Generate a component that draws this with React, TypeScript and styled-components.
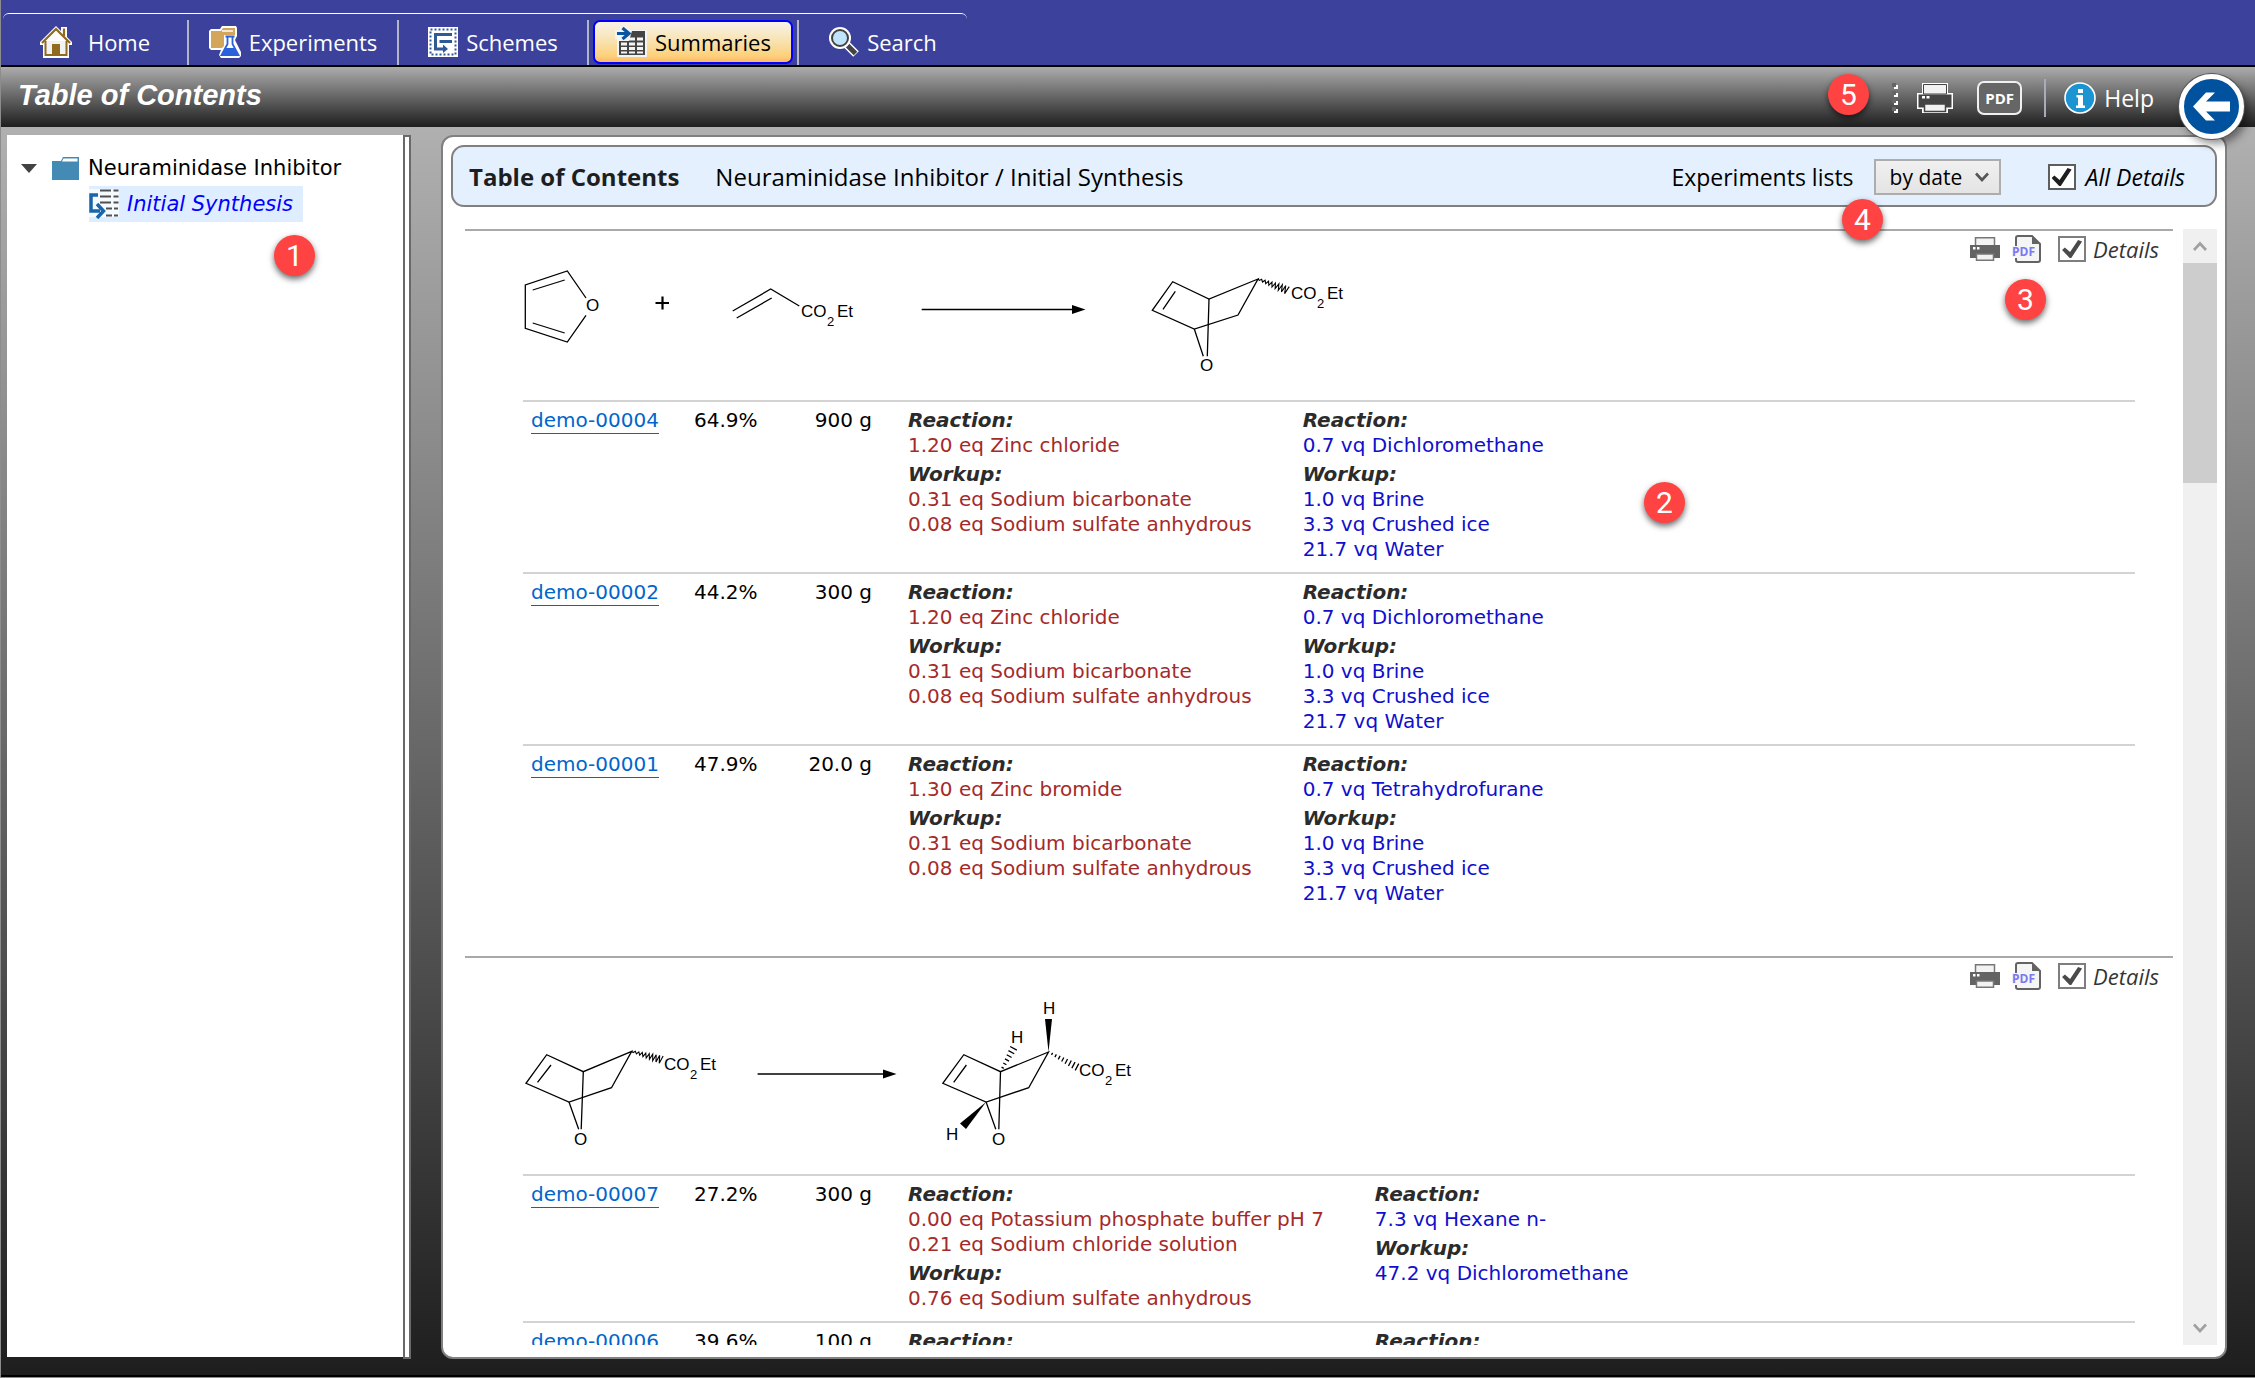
import React from 'react';
import styled, { createGlobalStyle, css } from 'styled-components';

const ui = '"Open Sans", "Noto Sans", sans-serif';
const body = '"DejaVu Sans", sans-serif';

const Global = createGlobalStyle`
  * { box-sizing: border-box; }
  html, body { margin: 0; height: 100%; }
  #root { height: 100%; }
  body { font-family: ${ui}; font-size: 22px; color: #000; }
  button, input, select { font: inherit; margin: 0; padding: 0; }
`;

const Page = styled.div`
  position: relative;
  display: flex;
  flex-direction: column;
  height: 100vh;
  overflow: hidden;
  border-left: 1px solid #8c8c8c;
  border-bottom: 1px solid #8c8c8c;
`;

/* ---------- top navigation ---------- */

const Nav = styled.nav`
  flex: none;
  display: flex;
  padding: 13px 2px 0;
  background: #3c429b;
  border-bottom: 2px solid #000;
`;

const Tabs = styled.div`
  display: flex;
  align-items: stretch;
  height: 52px;
  padding-top: 6px;
  border-top: 1px solid #fff;
  border-radius: 6px 6px 0 0;
`;

const TabCell = styled.div<{ $w: number }>`
  display: flex;
  width: ${p => p.$w}px;
  padding: 0 4px 1px;
  border-right: 2px solid #b4b6c8;
  &:last-child { border-right: 0; }
`;

const Tab = styled.button<{ $active?: boolean; $gap?: number }>`
  flex: 1;
  display: flex;
  align-items: center;
  justify-content: center;
  gap: ${p => p.$gap ?? 8}px;
  line-height: 28px;
  color: #fff;
  background: none;
  border: 2px solid transparent;
  border-radius: 7px;
  ${p => p.$active && css`
    color: #000;
    border-color: #0000ff;
    background: linear-gradient(#f8f4ea 0%, #f8dfa6 55%, #fdd07a 85%, #ffb765 100%);
  `}
  svg { flex: none; display: block; }
`;

/* ---------- dark title bar ---------- */

const TitleBar = styled.header`
  flex: none;
  display: flex;
  align-items: center;
  justify-content: space-between;
  height: 60px;
  padding: 0 101px 0 17px;
  background: linear-gradient(#acacac, #1e1e1e);
`;

const Title = styled.h1`
  margin: 0 0 4px;
  font: italic bold 29px/36px "Liberation Sans", sans-serif;
  color: #fff;
`;

const Tools = styled.div`
  display: flex;
  align-items: center;
  padding-top: 2px;
  color: #fff;
`;

const IconButton = styled.button<{ $left?: number }>`
  display: flex;
  align-items: center;
  margin-left: ${p => p.$left ?? 0}px;
  border: 0;
  background: none;
  color: inherit;
  svg { display: block; }
`;

const PdfButton = styled.button`
  width: 45px;
  height: 34px;
  margin-left: 24px;
  font-weight: 700;
  font-size: 15px;
  color: #fff;
  background: #666;
  border: 2px solid #f0f0f0;
  border-radius: 7px;
`;

const ToolSeparator = styled.span`
  width: 2px;
  height: 38px;
  margin: 0 18px 0 22px;
  background: #a6acb8;
`;

const HelpLink = styled.a`
  display: flex;
  align-items: center;
  gap: 8px;
  font-size: 23px;
  color: #fff;
  text-decoration: none;
  svg { display: block; }
`;

const BackButton = styled.button`
  position: absolute;
  top: 74px;
  right: 11px;
  width: 65px;
  height: 65px;
  background: #00529f;
  border: 5px solid #fff;
  border-radius: 50%;
  box-shadow: 0 0 0 1px #555, 4px 5px 8px rgba(0, 0, 0, 0.45);
  svg { display: block; }
`;

/* ---------- main area ---------- */

const Main = styled.main`
  flex: 1;
  min-height: 0;
  display: flex;
  padding: 8px 28px 16px 6px;
  background: linear-gradient(#b0b0b0, #1e1e1e);
  border-bottom: 2px solid #000;
`;

const Tree = styled.aside`
  flex: none;
  width: 396px;
  margin-bottom: 2px;
  padding: 15px 14px;
  background: #fff;
  font-family: ${body};
  font-size: 21px;
  line-height: 36px;
`;

const TreeRow = styled.div`
  display: flex;
  align-items: center;
  svg { display: block; }
`;

const Toggle = styled.button`
  margin-right: 15px;
  border: 0;
  background: none;
`;

const FolderName = styled.span`
  margin-left: 9px;
`;

const TreeItem = styled.a`
  display: inline-flex;
  align-items: center;
  gap: 8px;
  margin-left: 68px;
  padding-right: 10px;
  background: #deedff;
  color: #0000ff;
  font-style: italic;
  text-decoration: none;
`;

const Splitter = styled.div`
  flex: none;
  width: 8px;
  margin-right: 30px;
  background: #fff;
  border: 2px solid #696969;
`;

const Panel = styled.section`
  flex: 1;
  min-width: 0;
  display: flex;
  flex-direction: column;
  padding: 8px 8px 12px;
  background: #fff;
  border: 2px solid #808080;
  border-radius: 12px;
`;

const PanelHead = styled.div`
  flex: none;
  display: flex;
  align-items: center;
  height: 62px;
  padding: 2px 30px 0 16px;
  background: #e4f0fe;
  border: 2px solid #808080;
  border-radius: 13px;
  line-height: 32px;
`;

const PanelTitle = styled.h2`
  margin: 0 36px 0 0;
  font-size: 24px;
  font-weight: 700;
  color: #1e1e1e;
`;

const Crumb = styled.span`
  flex: 1;
  font-size: 24px;
`;

const SortLabel = styled.label`
  margin-right: 20px;
  font-size: 23px;
`;

const SelectBox = styled.div`
  position: relative;
  width: 127px;
  margin-right: 47px;
  svg { position: absolute; right: 12px; top: 13px; pointer-events: none; }
`;

const Select = styled.select`
  appearance: none;
  display: block;
  width: 100%;
  height: 36px;
  padding: 0 14px;
  color: #000;
  background: linear-gradient(#f0f0f0, #e4e4e4);
  border: 2px solid #adadad;
  border-radius: 0;
  font-size: 21px;
`;

const CheckLabel = styled.label<{ $soft?: boolean }>`
  display: flex;
  align-items: center;
  gap: ${p => (p.$soft ? 7 : 10)}px;
  font-style: italic;
  font-size: ${p => (p.$soft ? 22 : 23)}px;
  line-height: 28px;
  opacity: ${p => (p.$soft ? 0.8 : 1)};
`;

const Check = styled.input`
  appearance: none;
  display: block;
  width: 28px;
  height: 26px;
  background: #fff;
  border: 2px solid #5e5e5e;
  &:checked::before {
    content: '';
    display: block;
    width: 20px;
    height: 18px;
    margin: 2px;
    background: #1e1e1e;
    clip-path: polygon(0 55%, 14% 42%, 40% 66%, 80% 0, 100% 8%, 46% 100%, 38% 100%);
  }
`;

/* ---------- scrolling list ---------- */

const ListArea = styled.div`
  flex: 1;
  min-height: 0;
  display: flex;
  margin-top: 22px;
  padding-left: 14px;
`;

const List = styled.div`
  flex: 1;
  min-width: 0;
  margin-right: 10px;
  overflow: hidden;
  font-family: ${body};
  font-size: 20px;
  line-height: 25px;
`;

const ScrollBar = styled.div`
  flex: none;
  display: flex;
  flex-direction: column;
  justify-content: space-between;
  width: 34px;
  background: #f0f0f0;
`;

const ScrollButton = styled.button`
  display: grid;
  place-items: center;
  width: 34px;
  height: 34px;
  border: 0;
  background: #f0f0f0;
`;

const Thumb = styled.div`
  height: 220px;
  margin-bottom: auto;
  background: #cdcdcd;
`;

const Group = styled.article`
  padding-bottom: 40px;
  border-top: 2px solid #a9a9a9;
`;

const GroupHead = styled.div`
  display: flex;
  justify-content: space-between;
  align-items: flex-start;
  padding-left: 50px;
  > svg { display: block; flex: none; }
`;

const GroupTools = styled.div`
  display: flex;
  align-items: center;
  gap: 12px;
  padding: 4px 14px 0 0;
  font-family: ${ui};
  ${CheckLabel} { margin-left: 4px; }
`;

const Runs = styled.table`
  width: calc(100% - 96px);
  margin-left: 58px;
  border-collapse: collapse;
`;

const Run = styled.tr`
  border-top: 2px solid #d3d3d3;
`;

const Cell = styled.td<{ $w?: number; $right?: boolean; $color?: string }>`
  padding: 6px ${p => (p.$color ? 51 : 0)}px 10px 0;
  ${p => p.$w && css`width: ${p.$w}px; min-width: ${p.$w}px;`}
  text-align: ${p => (p.$right ? 'right' : 'left')};
  vertical-align: top;
  white-space: nowrap;
  color: ${p => p.$color ?? '#000'};
  &:first-child { padding-left: 8px; }
  &:nth-child(3) { padding-right: 36px; }
  &:last-child { width: 100%; }
`;

const RunLink = styled.a`
  padding-bottom: 1px;
  color: #0066cc;
  text-decoration: none;
  border-bottom: 1px solid #0066cc;
`;

const Phase = styled.div`
  font-weight: 700;
  font-style: italic;
  color: #2b2b2b;
  &:not(:first-child) { margin-top: 4px; }
`;

/* ---------- callout markers ---------- */

const Marker = styled.span<{ $x: number; $y: number }>`
  position: absolute;
  left: ${p => p.$x}px;
  top: ${p => p.$y}px;
  width: 41px;
  height: 41px;
  border-radius: 50%;
  background: #ff4343;
  color: #fff;
  font: 30px/41px Roboto, sans-serif;
  text-align: center;
  box-shadow: 0 3px 6px rgba(0, 0, 0, 0.6);
`;

/* ---------- icons ---------- */

const HomeIcon = () => (
  <svg width="32" height="32" viewBox="0 0 32 32">
    <path d="M16 0 L21 5 V1 H27 V11 L32 16 V19 H29 V32 H3 V19 H0 V16 Z" fill="#fff" />
    <path d="M5.500 15 V29 H26.500 V15" fill="#f2f2f5" stroke="#8f6a1f" strokeWidth="2" />
    <path d="M2 17 L16 3 L30 17" fill="none" stroke="#8f6a1f" strokeWidth="2.200" />
    <path d="M24 2.500 V10" stroke="#8f6a1f" strokeWidth="2.200" />
    <path d="M12 18 H20 V29 H12 Z" fill="#8f6a1f" />
  </svg>
);

const ExperimentsIcon = () => (
  <svg width="32" height="32" viewBox="0 0 32 32">
    <path d="M2 3 H11 L13 0 H27 L28 2 V10 L26 14 L32 26 V30 L30 32 H12 L10 29 L12 24 H2 L0 22 V5 Z" fill="#fff" />
    <path d="M2 5 H12 L14 2 H26 V10 H15 V20 L13 22 H2 Z" fill="#d3a65b" />
    <path d="M13 5 H24" stroke="#fff" strokeWidth="1.500" />
    <path d="M15 9 H26 V12 H25 V18 L31 28 V31 H11 V28 L17 18 V12 H15 Z" fill="#fff" />
    <path d="M16.500 10.500 H25.500 M18.500 11 V18 L12.500 29 H29.500 L23.500 18 V11" fill="none" stroke="#2a62dc" strokeWidth="1.800" />
    <path d="M16.500 22 H25.500 L30 30 H12 Z" fill="#2a62dc" />
  </svg>
);

const SchemesIcon = () => (
  <svg width="30" height="30" viewBox="0 0 30 30">
    <path d="M0 0 H30 V30 H0 Z" fill="#fff" />
    <rect x="2.500" y="2.500" width="25" height="25" fill="none" stroke="#305a96" strokeWidth="2" strokeDasharray="2 2" />
    <path d="M24 7.500 H7.500 V22 H17" fill="none" stroke="#305a96" strokeWidth="3" />
    <path d="M24 14.500 H11.500" stroke="#305a96" strokeWidth="3" />
    <path d="M15 17.500 L20 22 L15 26 Z" fill="#305a96" />
  </svg>
);

const SummariesIcon = () => (
  <svg width="32" height="30" viewBox="0 0 32 30">
    <path d="M5 0 H12 L16 3 H32 V30 H2 V12 H0 V3 H5 Z" fill="#f4f4f4" />
    <path d="M4 14 H30 V28 H4 Z" fill="#444" />
    <path d="M17 4 H30 V14 H14 Z" fill="#444" />
    <path d="M6 15.500h6v3h-6zM14 15.500h6v3h-6zM22 15.500h6v3h-6zM6 20h6v3h-6zM14 20h6v3h-6zM22 20h6v3h-6zM6 24.500h6v2h-6zM14 24.500h6v2h-6zM22 24.500h6v2h-6zM14 10.500h6v3h-6zM22 10.500h6v3h-6z" fill="#f4f4f4" />
    <path d="M2 6.500 H12 M7.500 1 L14 6.500 L7.500 12" fill="none" stroke="#0a559f" strokeWidth="3.200" />
  </svg>
);

const SearchIcon = () => (
  <svg width="30" height="30" viewBox="0 0 30 30">
    <path d="M17 17 L27 27" stroke="#fff" strokeWidth="8" />
    <path d="M17 17 L26.500 26.500" stroke="#444" strokeWidth="5" />
    <circle cx="11" cy="11" r="11" fill="#fff" />
    <circle cx="11" cy="11" r="8" fill="#bfe4fb" stroke="#444" strokeWidth="2" />
  </svg>
);

const PrinterLarge = () => (
  <svg width="36" height="30" viewBox="0 0 36 30">
    <path d="M5 0 H31 V10 H36 V26 H31 V30 H5 V26 H0 V10 H5 Z" fill="#fff" />
    <path d="M6.500 1.500 H29.500 V11 H6.500 Z" fill="#f2f2f2" stroke="#444" />
    <path d="M1.500 11.500 H34.500 V24.500 H1.500 Z" fill="#444" />
    <path d="M5 13h3v2.500h-3zM9.500 13h3v2.500h-3z" fill="#fff" />
    <path d="M7.500 21 H28.500 V28.500 H7.500 Z" fill="#f2f2f2" stroke="#444" strokeWidth="1.500" />
  </svg>
);

const PrinterSmall = () => (
  <svg width="30" height="24" viewBox="0 0 30 24">
    <path d="M5.500 0.750 H24.500 V9 H5.500 Z" fill="#f2f2f2" stroke="#777" strokeWidth="1.500" />
    <path d="M0 8 H30 V21 H0 Z" fill="#636363" />
    <path d="M3 10h2.500v2.500h-2.500zM7 10h2.500v2.500h-2.500z" fill="#fff" />
    <path d="M6.500 17 H23.500 V23.250 H6.500 Z" fill="#f2f2f2" stroke="#777" strokeWidth="1.500" />
  </svg>
);

const PdfFile = () => (
  <svg width="30" height="28" viewBox="0 0 30 28">
    <path d="M4 11 V3 Q4 1 6 1 H20 L28 9 V25 Q28 27 26 27 H6 Q4 27 4 25 V23" fill="#f5f5f5" stroke="#636363" strokeWidth="2" />
    <path d="M20 1 L28 9 H20 Z" fill="#636363" />
    <path d="M0 11 H23 V22 H0 Z" fill="#f5f5f5" />
    <text x="0" y="21" fontFamily="Open Sans, sans-serif" fontWeight="700" fontSize="12" fill="#7b78f2">PDF</text>
  </svg>
);

const InfoIcon = () => (
  <svg width="32" height="32" viewBox="0 0 32 32">
    <circle cx="16" cy="16" r="15" fill="#1c94d2" stroke="#fff" strokeWidth="1.600" />
    <path d="M14 7h5v4h-5zM12.500 13h6.500v10.500h2v2.500h-9v-2.500h2v-8h-1.500z" fill="#fff" />
  </svg>
);

const GripIcon = () => (
  <svg width="6" height="30" viewBox="0 0 6 30">
    {[0, 8, 16, 24].map(y => (
      <g key={y}>
        <path d={`M0 ${y}h4v4h-4z`} fill="#666" />
        <path d={`M6 ${y + 2}v4h-4v-2h2v-2z`} fill="#fff" />
      </g>
    ))}
  </svg>
);

const BackArrow = () => (
  <svg width="55" height="55" viewBox="0 0 55 55">
    <path d="M9 27.500 L22 13.500 H31 L22 22.500 H46 V32.500 H22 L31 41.500 H22 Z" fill="#fff" />
  </svg>
);

const FolderIcon = () => (
  <svg width="27" height="23" viewBox="0 0 27 23">
    <path d="M0 4 H9 L11 0 H27 V23 H0 Z" fill="#438bb5" />
    <path d="M10 4.500 L11.500 1.500 H25.500 V4.500 Z" fill="#fff" />
  </svg>
);

const SchemeItemIcon = () => (
  <svg width="30" height="30" viewBox="0 0 30 30">
    <path d="M0 0 H30 V28 H0 Z" fill="#fff" fillOpacity="0.7" />
    <path d="M11 1.500h11M24.500 1.500h5M11 7.500h11M24.500 7.500h5M11 13.500h11M24.500 13.500h5M17 19.500h6M25 19.500h4M17 26.500h6M25 26.500h4" stroke="#505050" strokeWidth="2" />
    <path d="M9 6 H2 V22 H11" fill="none" stroke="#1766ab" strokeWidth="3.500" />
    <path d="M8 15 L14.500 22 L8 29" fill="none" stroke="#1766ab" strokeWidth="3.500" />
  </svg>
);

const Chevron = ({ up, color = '#a0a0a0' }: { up?: boolean; color?: string }) => (
  <svg width="14" height="10" viewBox="0 0 14 10">
    <path d={up ? 'M1 9 L7 2.500 L13 9' : 'M1 1.500 L7 8 L13 1.500'} fill="none" stroke={color} strokeWidth="2.600" />
  </svg>
);

/* ---------- reaction drawings ---------- */

const Drawing = styled.svg`
  fill: none;
  stroke: #000;
  stroke-width: 1.3px;
  text { fill: #000; stroke: none; font: 17px "Liberation Sans", sans-serif; }
  text.sub { font-size: 13px; }
  .solid { fill: #000; stroke: none; }
  .heavy { stroke-width: 2.2px; }
  .fine { stroke-width: 1.1px; }
`;

const Ester = ({ x, y }: { x: number; y: number }) => (
  <>
    <text x={x} y={y}>CO</text>
    <text className="sub" x={x + 26} y={y + 9}>2</text>
    <text x={x + 36} y={y}>Et</text>
  </>
);

/* zig-zag bond that widens from its first point to its last */
const wavy = (x1: number, y1: number, x2: number, y2: number) => {
  const n = 18;
  const len = Math.hypot(x2 - x1, y2 - y1);
  const nx = -(y2 - y1) / len;
  const ny = (x2 - x1) / len;
  let d = `M${x1} ${y1}`;
  for (let i = 1; i <= n; i++) {
    const t = i / n;
    const a = (i % 2 ? 1 : -1) * (0.6 + 3.6 * t);
    d += ` L${(x1 + (x2 - x1) * t + nx * a).toFixed(2)} ${(y1 + (y2 - y1) * t + ny * a).toFixed(2)}`;
  }
  return d;
};

/* hashed bond: short bars across the line, widening */
const hashed = (x1: number, y1: number, x2: number, y2: number, n: number) => {
  const len = Math.hypot(x2 - x1, y2 - y1);
  const nx = -(y2 - y1) / len;
  const ny = (x2 - x1) / len;
  let d = '';
  for (let i = 1; i <= n; i++) {
    const t = i / n;
    const a = 0.8 + 3 * t;
    const cx = x1 + (x2 - x1) * t;
    const cy = y1 + (y2 - y1) * t;
    d += `M${(cx - nx * a).toFixed(2)} ${(cy - ny * a).toFixed(2)} L${(cx + nx * a).toFixed(2)} ${(cy + ny * a).toFixed(2)} `;
  }
  return d;
};

const SchemeOne = () => (
  <Drawing width="860" height="169" viewBox="515 231 860 169">
    <path d="M586 298 L567.3 271 L525.3 285 V328.300 L567.3 342 L586 315.300" />
    <path d="M532.7 290 L564.7 280 M532.7 323 L564.7 333" />
    <text x="586" y="311">O</text>
    <path className="heavy" d="M655.5 303 H669 M662.5 296.500 V309.500" />
    <path d="M732.7 311 L770.7 289 L799.3 306 M736.7 318 L771.7 298" />
    <Ester x={801} y={317} />
    <path d="M921.7 309.500 H1072" />
    <path className="solid" d="M1072 305 L1085.5 309.500 L1072 314 Z" />
    <path d="M1258 279 L1209 299 L1172.7 281.700 L1152.3 310.300 L1194.3 329 L1238 315 Z" />
    <path d="M1163 309.300 L1175.3 291.300 M1194.3 329 L1203.3 356.300 M1209 299 L1207.3 356.300" />
    <text x="1200" y="371">O</text>
    <path className="fine" d={wavy(1258, 279, 1287.7, 290.5)} />
    <Ester x={1291} y={299} />
  </Drawing>
);

const SchemeTwo = () => (
  <Drawing width="660" height="216" viewBox="515 958 660 216">
    <path d="M631.7 1051.300 L583.3 1071.700 L546.7 1054.700 L526 1083.300 L569 1102 L611.5 1087.700 Z" />
    <path d="M537.5 1082.300 L551 1065 M569 1102 L578.7 1129.300 M583.3 1071.700 L581.2 1129.300" />
    <text x="574" y="1145">O</text>
    <path className="fine" d={wavy(631.7, 1051.3, 662, 1060)} />
    <Ester x={664} y={1070} />
    <path d="M757.6 1074 H883" />
    <path className="solid" d="M883 1069.500 L896.5 1074 L883 1078.500 Z" />
    <path d="M1048.5 1052 L1000.5 1071.700 L963.8 1054.700 L942.8 1083.300 L986.1 1102 L1028.700 1087.700 Z" />
    <path d="M953.7 1082.300 L966.4 1065 M986.1 1102 L995.8 1129.300 M1000.5 1071.700 L998.8 1129.300" />
    <text x="992" y="1145">O</text>
    <path d={hashed(1000.5, 1071.7, 1013.5, 1048.3, 6)} />
    <text x="1011" y="1043">H</text>
    <path className="solid" d="M1048.5 1052 L1045 1019 H1052 Z" />
    <text x="1043" y="1014">H</text>
    <path className="solid" d="M986.1 1102 L960 1123.500 L966 1129 Z" />
    <text x="946" y="1140">H</text>
    <path d={hashed(1048.5, 1052, 1077, 1067, 8)} />
    <Ester x={1079} y={1076} />
  </Drawing>
);

/* ---------- data ---------- */

type Phases = [string, string[]][];
type RunData = { id: string; pct: string; amount: string; eq: Phases; vq: Phases };

const bicarb = ['0.31 eq Sodium bicarbonate', '0.08 eq Sodium sulfate anhydrous'];
const wash = ['1.0 vq Brine', '3.3 vq Crushed ice', '21.7 vq Water'];

const groupOne: RunData[] = [
  {
    id: 'demo-00004', pct: '64.9%', amount: '900 g',
    eq: [['Reaction:', ['1.20 eq Zinc chloride']], ['Workup:', bicarb]],
    vq: [['Reaction:', ['0.7 vq Dichloromethane']], ['Workup:', wash]],
  },
  {
    id: 'demo-00002', pct: '44.2%', amount: '300 g',
    eq: [['Reaction:', ['1.20 eq Zinc chloride']], ['Workup:', bicarb]],
    vq: [['Reaction:', ['0.7 vq Dichloromethane']], ['Workup:', wash]],
  },
  {
    id: 'demo-00001', pct: '47.9%', amount: '20.0 g',
    eq: [['Reaction:', ['1.30 eq Zinc bromide']], ['Workup:', bicarb]],
    vq: [['Reaction:', ['0.7 vq Tetrahydrofurane']], ['Workup:', wash]],
  },
];

const groupTwo: RunData[] = [
  {
    id: 'demo-00007', pct: '27.2%', amount: '300 g',
    eq: [
      ['Reaction:', ['0.00 eq Potassium phosphate buffer pH 7', '0.21 eq Sodium chloride solution']],
      ['Workup:', ['0.76 eq Sodium sulfate anhydrous']],
    ],
    vq: [['Reaction:', ['7.3 vq Hexane n-']], ['Workup:', ['47.2 vq Dichloromethane']]],
  },
  { id: 'demo-00006', pct: '39.6%', amount: '100 g', eq: [['Reaction:', []]], vq: [['Reaction:', []]] },
];

const PhaseList = ({ phases }: { phases: Phases }) => (
  <>
    {phases.map(([name, items]) => (
      <React.Fragment key={name}>
        <Phase>{name}</Phase>
        {items.map(item => <div key={item}>{item}</div>)}
      </React.Fragment>
    ))}
  </>
);

const ReactionGroup = ({ scheme, runs, id }: { scheme: React.ReactNode; runs: RunData[]; id: string }) => (
  <Group>
    <GroupHead>
      {scheme}
      <GroupTools>
        <IconButton aria-label="Print"><PrinterSmall /></IconButton>
        <IconButton aria-label="Export to PDF"><PdfFile /></IconButton>
        <CheckLabel $soft htmlFor={id}>
          <Check type="checkbox" id={id} defaultChecked />
          Details
        </CheckLabel>
      </GroupTools>
    </GroupHead>
    <Runs>
      <tbody>
        {runs.map(r => (
          <Run key={r.id}>
            <Cell $w={171}><RunLink href="#">{r.id}</RunLink></Cell>
            <Cell $w={76}>{r.pct}</Cell>
            <Cell $w={138} $right>{r.amount}</Cell>
            <Cell $color="#a52a2a"><PhaseList phases={r.eq} /></Cell>
            <Cell $color="#0f0fcd"><PhaseList phases={r.vq} /></Cell>
          </Run>
        ))}
      </tbody>
    </Runs>
  </Group>
);

export default function App() {
  return (
    <>
      <Global />
      <Page>
        <Nav>
          <Tabs>
            <TabCell $w={186}><Tab $gap={16}><HomeIcon />Home</Tab></TabCell>
            <TabCell $w={210}><Tab><ExperimentsIcon />Experiments</Tab></TabCell>
            <TabCell $w={190}><Tab><SchemesIcon />Schemes</Tab></TabCell>
            <TabCell $w={210}><Tab $active><SummariesIcon />Summaries</Tab></TabCell>
            <TabCell $w={168}><Tab><SearchIcon />Search</Tab></TabCell>
          </Tabs>
        </Nav>
        <TitleBar>
          <Title>Table of Contents</Title>
          <Tools>
            <GripIcon />
            <IconButton $left={19} aria-label="Print"><PrinterLarge /></IconButton>
            <PdfButton>PDF</PdfButton>
            <ToolSeparator />
            <HelpLink href="#"><InfoIcon />Help</HelpLink>
          </Tools>
        </TitleBar>
        <Main>
          <Tree>
            <TreeRow>
              <Toggle aria-label="Collapse">
                <svg width="16" height="9" viewBox="0 0 16 9"><path d="M0 0 H16 L8 9 Z" fill="#404244" /></svg>
              </Toggle>
              <FolderIcon />
              <FolderName>Neuraminidase Inhibitor</FolderName>
            </TreeRow>
            <TreeRow>
              <TreeItem href="#"><SchemeItemIcon />Initial Synthesis</TreeItem>
            </TreeRow>
          </Tree>
          <Splitter />
          <Panel>
            <PanelHead>
              <PanelTitle>Table of Contents</PanelTitle>
              <Crumb>Neuraminidase Inhibitor / Initial Synthesis</Crumb>
              <SortLabel htmlFor="sort">Experiments lists</SortLabel>
              <SelectBox>
                <Select id="sort" defaultValue="date">
                  <option value="date">by date</option>
                </Select>
                <Chevron color="#555" />
              </SelectBox>
              <CheckLabel htmlFor="all">
                <Check type="checkbox" id="all" defaultChecked />
                All Details
              </CheckLabel>
            </PanelHead>
            <ListArea>
              <List>
                <ReactionGroup id="details-1" scheme={<SchemeOne />} runs={groupOne} />
                <ReactionGroup id="details-2" scheme={<SchemeTwo />} runs={groupTwo} />
              </List>
              <ScrollBar>
                <ScrollButton aria-label="Scroll up"><Chevron up /></ScrollButton>
                <Thumb />
                <ScrollButton aria-label="Scroll down"><Chevron /></ScrollButton>
              </ScrollBar>
            </ListArea>
          </Panel>
        </Main>
        <BackButton aria-label="Back"><BackArrow /></BackButton>
        <Marker $x={273} $y={235}>1</Marker>
        <Marker $x={1643} $y={482}>2</Marker>
        <Marker $x={2004} $y={279}>3</Marker>
        <Marker $x={1841} $y={199}>4</Marker>
        <Marker $x={1827} $y={74}>5</Marker>
      </Page>
    </>
  );
}
